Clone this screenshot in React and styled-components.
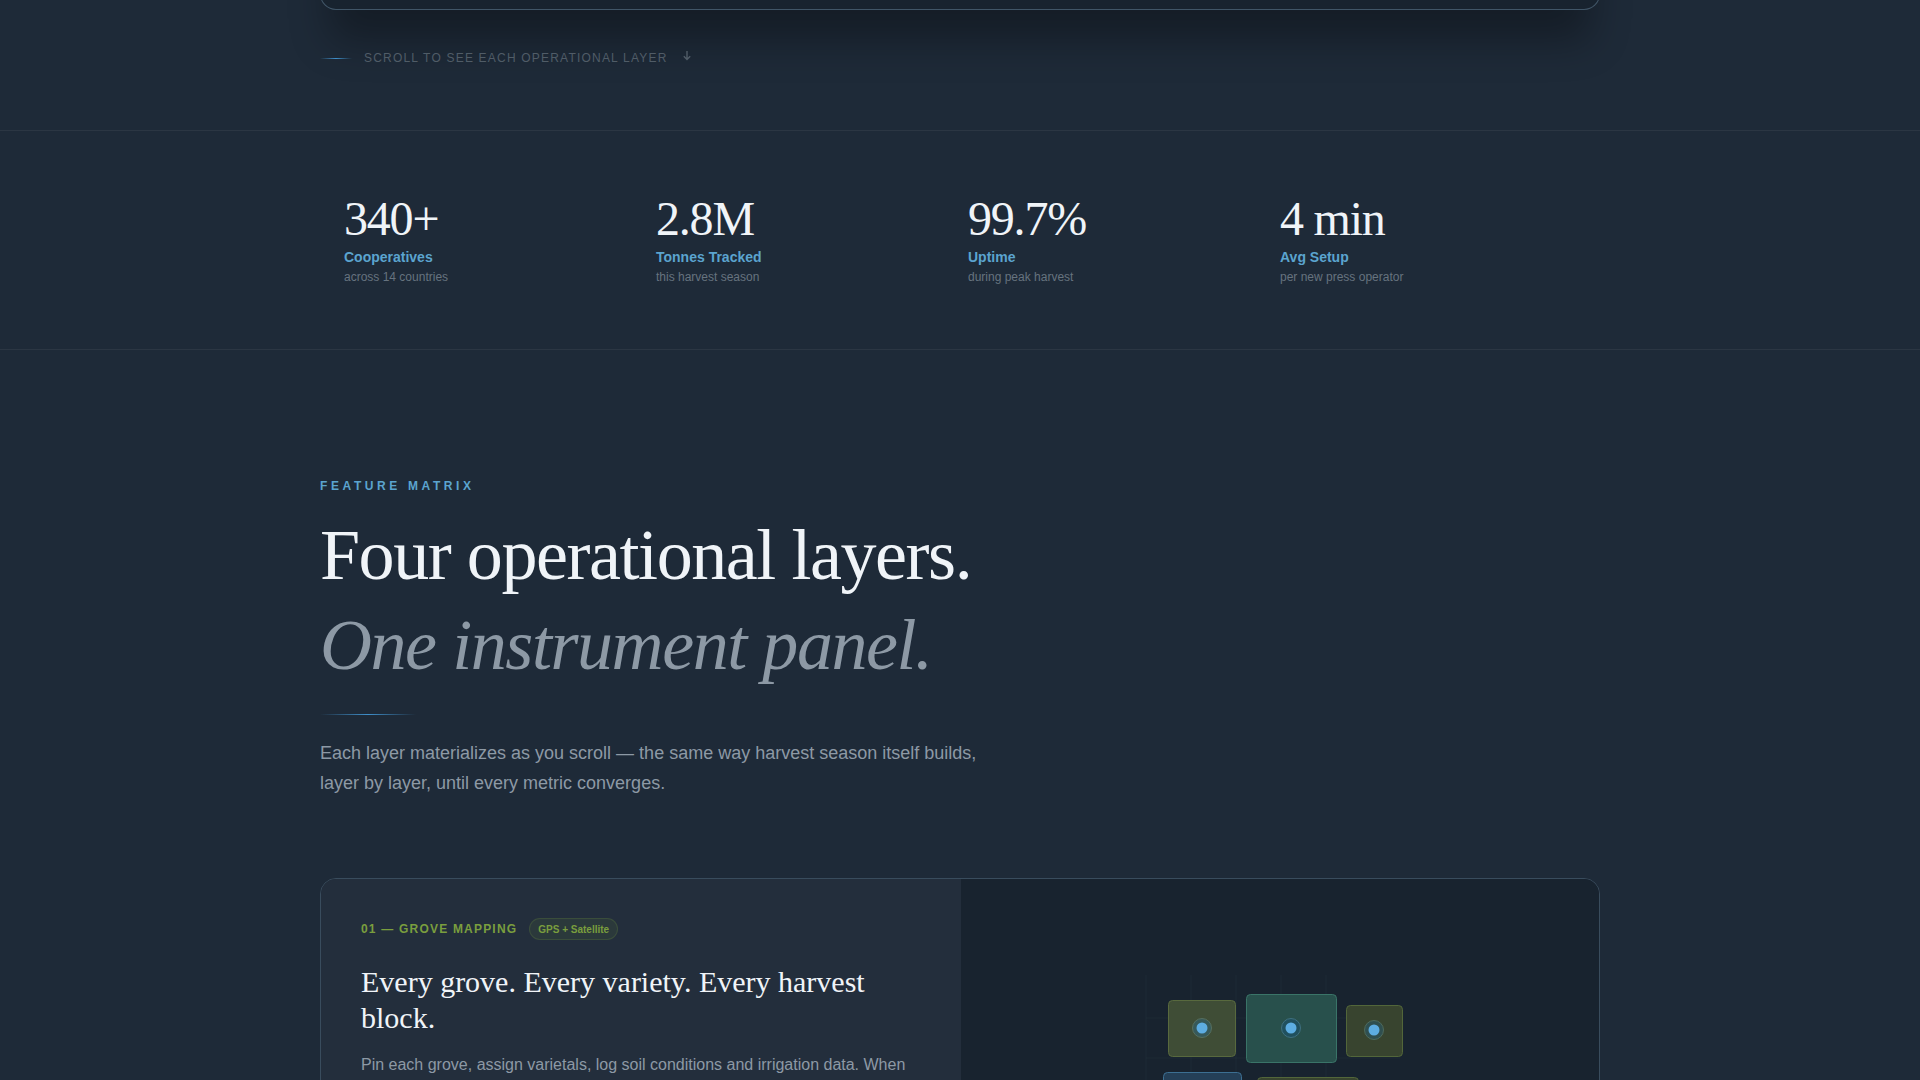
import React from "react";
import styled, { createGlobalStyle } from "styled-components";

const Global = createGlobalStyle`
  html, body { margin: 0; padding: 0; height: 1080px; overflow: hidden; background: #1e2a38; }
  body { font-family: "Liberation Sans", Arial, sans-serif; color: #f0f4f8; }
  * { box-sizing: border-box; }
`;
const Page = styled.div`height: 1080px; overflow: hidden; background: #1e2a38;`;
const Wrap = styled.div`width: 1280px; margin: 0 auto;`;
const HeroEnd = styled.div`
  height: 400px; margin-top: -390px; background: #18232f; border: 1px solid rgba(122,155,180,.42);
  border-radius: 16px; box-shadow: 0 40px 40px -10px rgba(0,0,0,.32);
`;
const ScrollHint = styled.div`
  display: flex; align-items: center; gap: 12px; height: 22px; margin-top: 37px;
  font-size: 12px; letter-spacing: .1em; color: #505c67; text-transform: uppercase;
`;
const HintLine = styled.span`
  width: 32px; height: 1px; background: linear-gradient(90deg, transparent, #3f8fca, transparent); margin-top: 1px;
`;
const HintArrow = styled.span`display: flex; margin: -4px 0 0 1px; color: #505c67;`;
const StatsBand = styled.section`
  margin-top: 61px; height: 220px; border-top: 1px solid rgba(255,255,255,.06); border-bottom: 1px solid rgba(255,255,255,.06);
`;
const StatsGrid = styled(Wrap)`display: grid; grid-template-columns: repeat(4, 312px); padding: 62px 0 0 24px;`;
const Stat = styled.div`display: flex; flex-direction: column;`;
const StatValue = styled.div`
  font-family: "Liberation Serif", serif; font-size: 48px; line-height: 52px; letter-spacing: -.025em; color: #f0f4f8;
`;
const StatLabel = styled.div`font-size: 14px; font-weight: 700; line-height: 18px; margin-top: 3px; color: #5ba4cf;`;
const StatSub = styled.div`font-size: 12px; line-height: 16px; margin-top: 3px; color: #66737f;`;
const Features = styled(Wrap)`padding-top: 128px;`;
const Eyebrow = styled.div`font-size: 12px; font-weight: 700; letter-spacing: .3em; line-height: 16px; color: #5ba4cf; text-transform: uppercase;`;
const Heading = styled.h2`
  margin: 16px 0 0; font-family: "Liberation Serif", serif; font-weight: 400; font-size: 72px; line-height: 90px;
  letter-spacing: -.02em; color: #f0f4f8;
`;
const Muted = styled.em`display: block; color: #8d99a5;`;
const Rule = styled.div`
  width: 96px; height: 1px; margin-top: 24px;
  background: linear-gradient(90deg, transparent, #3f8fca, transparent);
`;
const Lead = styled.p`margin: 23px 0 0; font-size: 18px; line-height: 30px; color: #8d99a5; max-width: 680px;`;
const LayerCard = styled.article`
  display: grid; grid-template-columns: 640px 1fr; margin-top: 80px; height: 400px;
  border: 1px solid rgba(122,155,180,.3); border-radius: 16px; overflow: hidden;
`;
const CardText = styled.div`background: #232e3c; padding: 39px 40px 0;`;
const LabelRow = styled.div`display: flex; align-items: center; gap: 12px; height: 22px;`;
const LayerLabel = styled.span`font-size: 12px; font-weight: 700; letter-spacing: .1em; color: #7a9e3e; text-transform: uppercase;`;
const Badge = styled.span`
  height: 22px; padding: 0 8px; display: flex; align-items: center; font-size: 10px; font-weight: 700; color: #7a9e3e;
  border: 1px solid rgba(122,158,62,.2); background: rgba(122,158,62,.1); border-radius: 11px;
`;
const CardTitle = styled.h3`
  margin: 24px 0 0; font-family: "Liberation Serif", serif; font-weight: 400; font-size: 30px; line-height: 36px; color: #f0f4f8;
`;
const CardBody = styled.p`margin: 16px 0 0; font-size: 16px; line-height: 26px; color: #8d99a5;`;
const CardVisual = styled.div`background: #18232f; position: relative;`;
const GroveSvg = styled.svg`position: absolute; left: 0; top: 0; display: block;`;

const tiles = [
  [1168, 1000, 67, 56, "#3f4d36", "#58693e"],
  [1246, 994, 90, 68, "#28504c", "#3a7468"],
  [1346, 1005, 56, 51, "#38442f", "#52663a"],
  [1163, 1072, 78, 60, "#243f57", "#3c6f92"],
  [1257, 1077, 101, 60, "#38442f", "#52663a"],
];
const dots = [
  [1202, 1028, "#36595a", "#566f5f"],
  [1291, 1028, "#20505e", "#3f7080"],
  [1374, 1030, "#2f4f50", "#4e6a5c"],
];
const stats = [
  ["340+", "Cooperatives", "across 14 countries"],
  ["2.8M", "Tonnes Tracked", "this harvest season"],
  ["99.7%", "Uptime", "during peak harvest"],
  ["4 min", "Avg Setup", "per new press operator"],
];

export default function App() {
  return (
    <Page>
      <Global />
      <Wrap>
        <HeroEnd />
        <ScrollHint>
          <HintLine />
          <span>Scroll to see each operational layer</span>
          <HintArrow>
            <svg width="12" height="12" viewBox="0 0 12 12" fill="none" stroke="currentColor" strokeWidth="1.4">
              <path d="M6 1v8.5M2.8 6.3 6 9.5l3.2-3.2" />
            </svg>
          </HintArrow>
        </ScrollHint>
      </Wrap>
      <StatsBand>
        <StatsGrid>
          {stats.map(([v, l, s]) => (
            <Stat key={l}>
              <StatValue>{v}</StatValue>
              <StatLabel>{l}</StatLabel>
              <StatSub>{s}</StatSub>
            </Stat>
          ))}
        </StatsGrid>
      </StatsBand>
      <Features>
        <Eyebrow>Feature Matrix</Eyebrow>
        <Heading>
          Four operational layers.
          <Muted>One instrument panel.</Muted>
        </Heading>
        <Rule />
        <Lead>
          Each layer materializes as you scroll — the same way harvest season itself builds, layer by layer, until every metric converges.
        </Lead>
        <LayerCard>
          <CardText>
            <LabelRow>
              <LayerLabel>01 — Grove Mapping</LayerLabel>
              <Badge>GPS + Satellite</Badge>
            </LabelRow>
            <CardTitle>Every grove. Every variety. Every harvest block.</CardTitle>
            <CardBody>
              Pin each grove, assign varietals, log soil conditions and irrigation data. When harvest begins, every block is ready.
            </CardBody>
          </CardText>
          <CardVisual>
            <GroveSvg width="638" height="398" viewBox="961 879 638 398">
              {[1146, 1191, 1236, 1281, 1326].map((x) => (
                <path key={x} d={`M${x} 975V1280`} stroke="rgba(122,155,180,.06)" />
              ))}
              {[1018, 1058].map((y) => (
                <path key={y} d={`M1146 ${y}H1400`} stroke="rgba(122,155,180,.05)" />
              ))}
              {tiles.map(([x, y, w, h, f, s]) => (
                <rect key={x} x={x + 0.5} y={y + 0.5} width={w} height={h} rx="4" fill={f} stroke={s} />
              ))}
              {dots.map(([x, y, f, s]) => (
                <g key={x}>
                  <circle cx={x} cy={y} r="9.5" fill={f} stroke={s} strokeWidth="1" />
                  <circle cx={x} cy={y} r="5.5" fill="#5dade2" />
                </g>
              ))}
            </GroveSvg>
          </CardVisual>
        </LayerCard>
      </Features>
    </Page>
  );
}
